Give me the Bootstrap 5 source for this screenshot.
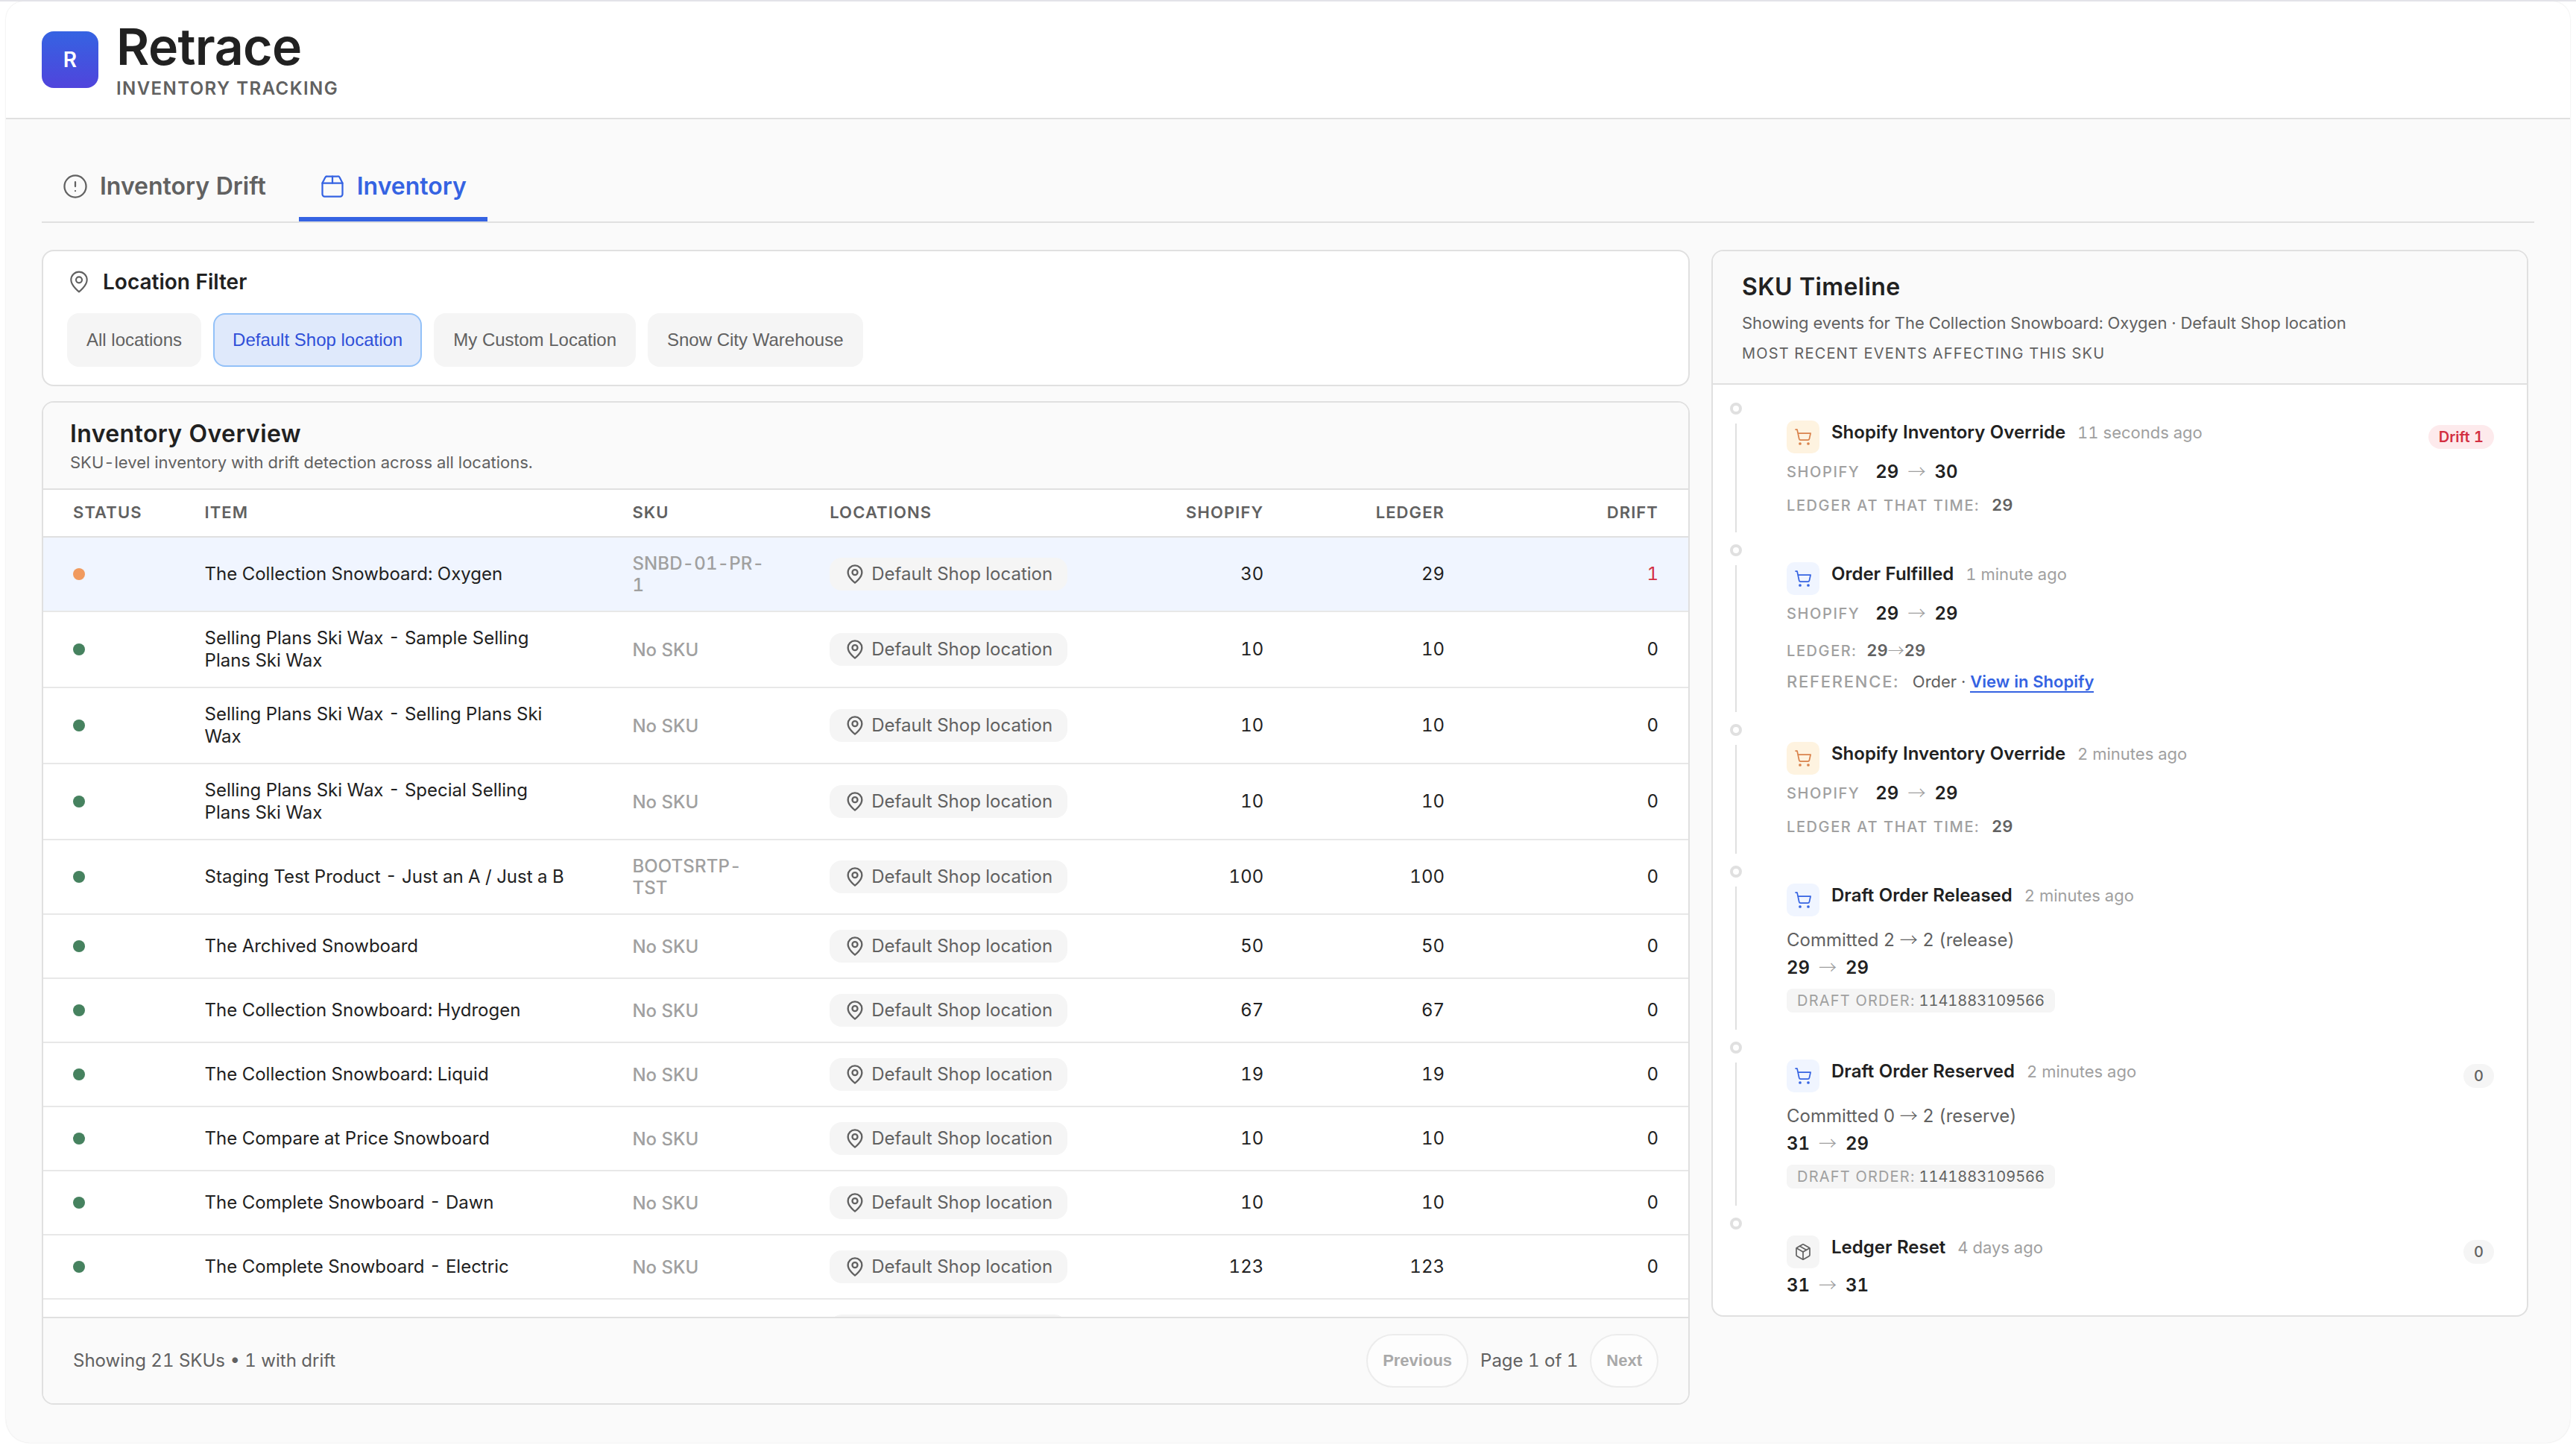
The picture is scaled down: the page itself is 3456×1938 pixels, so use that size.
<!DOCTYPE html>
<html lang="en">
<head>
  <meta charset="UTF-8" />
  <meta name="viewport" content="width=device-width, initial-scale=1" />
  <title>Retrace - Inventory Tracking</title>
  <!-- Bootstrap CSS -->
  <link href="https://cdn.jsdelivr.net/npm/bootstrap@5.3.0/dist/css/bootstrap.min.css" rel="stylesheet" />
  <style>
    /* Global Styles */
    html, body {
      margin: 0;
      height: 1938px;
      overflow: hidden;
    }
    body {
      font-family: Inter, "Liberation Sans", sans-serif;
      font-size: 24px;
      font-variant-numeric: tabular-nums;
      line-height: 1.25;
      color: #212121;
      background: #fff;
      border-top: 2px solid #e3e3e8;
      padding: 0 8px;
    }
    svg {
      fill: none;
      stroke: currentColor;
      stroke-width: 2;
      stroke-linecap: round;
      stroke-linejoin: round;
      flex-shrink: 0;
    }
    .app-shell {
      height: 1933px;
      background: #fafafa;
      border-radius: 24px 24px 32px 32px;
      box-shadow: 0 0 2px rgba(0,0,0,0.15);
      overflow: hidden;
    }
    /* Header */
    .app-header {
      height: 158px;
      padding: 0 48px;
      background: #fff;
      border-bottom: 2px solid #e0e0e0;
    }
    .logo-box {
      width: 76px;
      height: 76px;
      border-radius: 16px;
      background: linear-gradient(180deg, #3563e2, #5044dc);
      color: #fff;
      font-size: 28px;
      font-weight: 600;
    }
    .brand-name {
      font-size: 68px;
      font-weight: 600;
      line-height: 76px;
      letter-spacing: -0.009em;
      margin-top: -2px;
    }
    .brand-sub {
      margin-top: 4px;
      font-size: 24px;
      font-weight: 600;
      line-height: 30px;
      letter-spacing: 0.059em;
      color: #616161;
    }
    /* Tabs */
    .page-body { padding: 48px 48px 0; }
    .page-tabs {
      height: 91px;
      border-bottom: 2px solid #e0e0e0;
    }
    .page-tabs .nav-link {
      height: 89px;
      padding: 0 28px 0 27px;
      gap: 15px;
      font-size: 32px;
      font-weight: 600;
      color: #616161;
      border-bottom: 6px solid transparent;
    }
    .page-tabs .nav-link.active {
      color: #3563e2;
      border-bottom-color: #3563e2;
    }
    .page-tabs svg { stroke-width: 1.5; }
    /* Panels */
    .panel-grid {
      display: grid;
      grid-template-columns: 2211px 1096px;
      column-gap: 29px;
      margin-top: 36px;
      align-items: start;
    }
    .panel {
      background: #fff;
      border: 2px solid #e0e0e0;
      border-radius: 16px;
      overflow: hidden;
    }
    .panel-title {
      font-size: 32px;
      font-weight: 600;
      line-height: 40px;
      letter-spacing: 0.012em;
    }
    /* Location filter */
    .filter-panel {
      height: 183px;
      padding: 24px 32px;
    }
    .filter-title {
      font-size: 28px;
      font-weight: 600;
      line-height: 34px;
      height: 34px;
    }
    .filter-title svg { color: #616161; stroke-width: 1.6; }
    .filter-list { margin-top: 25px; }
    .filter-btn {
      height: 72px;
      padding: 0 24px;
      border: 2px solid transparent;
      border-radius: 16px;
      background: #f5f5f5;
      color: #616161;
      font: 24px "Liberation Sans", sans-serif;
    }
    .filter-btn.active {
      background: #dfe9fb;
      border-color: #93c1f8;
      color: #2f4fd8;
    }
    /* Inventory table */
    .overview-panel { margin-top: 20px; }
    .overview-head {
      height: 117px;
      padding: 22px 36px 0;
      background: #fafafa;
      border-bottom: 2px solid #e0e0e0;
    }
    .overview-sub {
      margin-top: 4px;
      font-size: 22px;
      line-height: 28px;
      color: #616161;
    }
    .table-wrap {
      height: 1109px;
      overflow: hidden;
    }
    .stock-table {
      width: 100%;
      table-layout: fixed;
      border-collapse: separate;
      border-spacing: 0;
    }
    .stock-table th {
      height: 64px;
      padding: 0 40px;
      font-size: 22px;
      font-weight: 600;
      letter-spacing: 0.05em;
      color: #616161;
      border-bottom: 2px solid #e0e0e0;
    }
    .stock-table td {
      padding: 20px 40px;
      vertical-align: middle;
      line-height: 30px;
      border-bottom: 2px solid #e8e8e8;
    }
    .stock-table tr.selected td { background: #f0f5ff; }
    .stock-table .sku-cell {
      font-weight: 500;
      line-height: 29px;
      color: #a0a0a0;
    }
    .sku-code { letter-spacing: 0.005em; }
    .qty { text-align: right; }
    .status-dot {
      display: block;
      width: 16px;
      height: 16px;
      border-radius: 50%;
      background: #46825f;
    }
    .status-dot.warn { background: #f19a5e; }
    .loc-chip {
      width: max-content;
      height: 44px;
      padding: 0 20px;
      gap: 8px;
      border-radius: 16px;
      background: #f5f5f5;
      color: #616161;
    }
    .drift-num { color: #d32f42; }
    .table-foot {
      height: 116px;
      padding: 0 40px;
      background: #fafafa;
      border-top: 2px solid #e0e0e0;
      color: #616161;
    }
    .pager-btn {
      height: 72px;
      padding: 0 20px;
      border: 2px solid #ececec;
      border-radius: 36px;
      background: #fdfdfd;
      color: #a9a9a9;
      font: bold 22px "Liberation Sans", sans-serif;
    }
    /* Timeline */
    .timeline-panel { height: 1431px; }
    .timeline-head {
      height: 179px;
      padding: 28px 39px 0;
      background: #fafafa;
      border-bottom: 2px solid #e0e0e0;
    }
    .timeline-sub {
      margin-top: 14px;
      font-size: 22px;
      line-height: 28px;
      letter-spacing: -0.001em;
      color: #616161;
    }
    .timeline-note {
      margin-top: 15px;
      font-size: 20px;
      line-height: 24px;
      letter-spacing: 0.059em;
      color: #616161;
    }
    .timeline-list { padding: 24px 44px 0 23px; }
    .event { gap: 60px; }
    .event-rail { width: 16px; }
    .rail-dot {
      width: 16px;
      height: 16px;
      border: 4px solid #e0e0e0;
      border-radius: 50%;
      flex-shrink: 0;
    }
    .rail-line {
      width: 2px;
      margin: 12px 0 16px;
      background: #e0e0e0;
    }
    .event-body { padding-top: 24px; }
    .ev-190 { height: 190px; }
    .ev-241 { height: 241px; }
    .ev-236 { height: 236px; }
    .ev-icon {
      width: 44px;
      height: 44px;
      border-radius: 10px;
      background: #f5f5f5;
      color: #616161;
    }
    .ev-icon svg { stroke-width: 1.7; }
    .ev-icon.amber { background: #fef3e0; color: #d9824b; }
    .ev-icon.blue { background: #f0f5ff; color: #3563e2; }
    .ev-title {
      margin-left: 16px;
      font-weight: 600;
      line-height: 31px;
    }
    .ev-time {
      margin-left: 16px;
      font-size: 22px;
      line-height: 32px;
      color: #a0a0a0;
    }
    .ev-pill {
      height: 32px;
      margin-top: 6px;
      padding: 0 14px;
      border-radius: 16px;
      background: #f5f5f5;
      color: #616161;
      font-size: 20px;
      font-weight: 500;
    }
    .ev-pill.danger-pill {
      background: #fdeaec;
      color: #d32f42;
      font-weight: 600;
    }
    .change {
      font-weight: 600;
      line-height: 30px;
    }
    .arrow {
      font-family: "Noto Sans CJK JP", sans-serif;
      font-weight: 300;
      line-height: 1;
    }
    .change .arrow, .ev-value .arrow { color: #a0a0a0; }
    .change .arrow { margin: 0 12px; }
    .ev-label {
      font-size: 20px;
      font-weight: 500;
      letter-spacing: 0.08em;
      color: #a0a0a0;
    }
    .ev-value {
      font-size: 22px;
      font-weight: 600;
      color: #616161;
    }
    .shop-line { height: 30px; margin-top: 10px; }
    .shop-line .ev-label { margin-right: 21px; }
    .reset-line { height: 30px; margin-top: 8px; }
    .ledger-line { height: 30px; margin-top: 15px; }
    .ledger-line.spaced { margin-top: 20px; }
    .ledger-line.spaced .ev-label { margin-right: 13px; }
    .ref-line { height: 30px; margin-top: 12px; font-size: 22px; color: #616161; }
    .ref-line .ev-label { font-size: 22px; margin-right: 18px; }
    .ref-line a {
      color: #3563e2;
      font-weight: 600;
      text-decoration: none;
      border-bottom: 2px solid #3563e2;
    }
    .note-line { margin-top: 16px; line-height: 32px; color: #616161; }
    .note-line + .change { margin-top: 6px; }
    .ref-chip {
      width: max-content;
      height: 32px;
      margin-top: 13px;
      padding: 0 14px;
      border-radius: 8px;
      background: #f5f5f5;
      font-size: 20px;
      color: #616161;
    }
    .ref-chip span { margin-right: 5px; color: #a0a0a0; letter-spacing: 0.06em; }
  </style>
</head>
<body>
  <!-- Shared icons -->
  <svg class="d-none">
    <symbol id="pin" viewBox="0 0 24 24"><path d="M20 10c0 6-8 12-8 12s-8-6-8-12a8 8 0 0 1 16 0Z" /><circle cx="12" cy="10" r="3" /></symbol>
    <symbol id="cart" viewBox="0 0 24 24"><circle cx="8" cy="21" r="1" /><circle cx="19" cy="21" r="1" /><path d="M2.05 2.05h2l2.66 12.42a2 2 0 0 0 2 1.58h9.78a2 2 0 0 0 1.95-1.57l1.65-7.43H5.12" /></symbol>
    <symbol id="box" viewBox="0 0 24 24"><path d="m7.5 4.27 9 5.15" /><path d="M21 8a2 2 0 0 0-1-1.73l-7-4a2 2 0 0 0-2 0l-7 4A2 2 0 0 0 3 8v8a2 2 0 0 0 1 1.73l7 4a2 2 0 0 0 2 0l7-4A2 2 0 0 0 21 16Z" /><path d="m3.3 7 8.7 5 8.7-5" /><path d="M12 22V12" /></symbol>
  </svg>

  <div class="app-shell">
    <!-- Header -->
    <header class="app-header d-flex align-items-center">
      <div class="logo-box d-flex align-items-center justify-content-center me-4">R</div>
      <div>
        <div class="brand-name">Retrace</div>
        <div class="brand-sub">INVENTORY TRACKING</div>
      </div>
    </header>

    <main class="page-body">
      <!-- Tabs -->
      <nav class="nav page-tabs">
        <a class="nav-link d-flex align-items-center" href="#">
          <svg width="36" height="36" viewBox="0 0 24 24"><circle cx="12" cy="12" r="9.7" /><path d="M12 8v4M12 16h.01" /></svg>
          Inventory Drift
        </a>
        <a class="nav-link active d-flex align-items-center ms-3" href="#">
          <svg width="36" height="36" viewBox="0 0 24 24"><path d="M3 9h18v10a2 2 0 0 1-2 2H5a2 2 0 0 1-2-2V9Z" /><path d="m3 9 2.45-4.9A2 2 0 0 1 7.24 3h9.52a2 2 0 0 1 1.8 1.1L21 9" /><path d="M12 3v6" /></svg>
          Inventory
        </a>
      </nav>

      <div class="panel-grid">
        <div>
          <!-- Location Filter -->
          <section class="panel filter-panel">
            <div class="filter-title d-flex align-items-center gap-3">
              <svg width="32" height="32"><use href="#pin" /></svg>
              Location Filter
            </div>
            <div class="filter-list d-flex gap-3">
              <button class="filter-btn">All locations</button>
              <button class="filter-btn active">Default Shop location</button>
              <button class="filter-btn">My Custom Location</button>
              <button class="filter-btn">Snow City Warehouse</button>
            </div>
          </section>

          <!-- Inventory Overview -->
          <section class="panel overview-panel">
            <div class="overview-head">
              <div class="panel-title">Inventory Overview</div>
              <div class="overview-sub">SKU-level inventory with drift detection across all locations.</div>
            </div>
            <div class="table-wrap">
              <table class="stock-table">
                <colgroup>
                  <col style="width: 8%" /><col style="width: 26%" /><col style="width: 12%" /><col style="width: 18%" /><col style="width: 12%" /><col style="width: 11%" /><col style="width: 13%" />
                </colgroup>
                <thead>
                  <tr>
                    <th>STATUS</th>
                    <th>ITEM</th>
                    <th>SKU</th>
                    <th>LOCATIONS</th>
                    <th class="qty">SHOPIFY</th>
                    <th class="qty">LEDGER</th>
                    <th class="qty">DRIFT</th>
                  </tr>
                </thead>
                <tbody id="stockRows"></tbody>
              </table>
            </div>
            <div class="table-foot d-flex align-items-center justify-content-between">
              <span>Showing 21 SKUs • 1 with drift</span>
              <div class="d-flex align-items-center gap-3">
                <button class="pager-btn" disabled>Previous</button>
                <span>Page 1 of 1</span>
                <button class="pager-btn" disabled>Next</button>
              </div>
            </div>
          </section>
        </div>

        <!-- SKU Timeline -->
        <aside class="panel timeline-panel">
          <div class="timeline-head">
            <div class="panel-title">SKU Timeline</div>
            <div class="timeline-sub">Showing events for The Collection Snowboard: Oxygen · Default Shop location</div>
            <div class="timeline-note">MOST RECENT EVENTS AFFECTING THIS SKU</div>
          </div>
          <div class="timeline-list" id="timelineList"></div>
        </aside>
      </div>
    </main>
  </div>

  <script src="https://cdn.jsdelivr.net/npm/bootstrap@5.3.0/dist/js/bootstrap.bundle.min.js"></script>
  <script>
    const stock = [
      { item: "The Collection Snowboard: Oxygen", sku: "SNBD-01-PR-1", shopify: 30, ledger: 29, drift: 1 },
      { item: "Selling Plans Ski Wax - Sample Selling Plans Ski Wax", shopify: 10, ledger: 10, drift: 0 },
      { item: "Selling Plans Ski Wax - Selling Plans Ski Wax", shopify: 10, ledger: 10, drift: 0 },
      { item: "Selling Plans Ski Wax - Special Selling Plans Ski Wax", shopify: 10, ledger: 10, drift: 0 },
      { item: "Staging Test Product - Just an A / Just a B", sku: "BOOTSRTP-TST", shopify: 100, ledger: 100, drift: 0 },
      { item: "The Archived Snowboard", shopify: 50, ledger: 50, drift: 0 },
      { item: "The Collection Snowboard: Hydrogen", shopify: 67, ledger: 67, drift: 0 },
      { item: "The Collection Snowboard: Liquid", shopify: 19, ledger: 19, drift: 0 },
      { item: "The Compare at Price Snowboard", shopify: 10, ledger: 10, drift: 0 },
      { item: "The Complete Snowboard - Dawn", shopify: 10, ledger: 10, drift: 0 },
      { item: "The Complete Snowboard - Electric", shopify: 123, ledger: 123, drift: 0 }
    ];

    // Render inventory rows
    document.getElementById("stockRows").innerHTML = stock.map(row => `
      <tr class="${row.drift ? "selected" : ""}">
        <td><span class="status-dot ${row.drift ? "warn" : ""}"></span></td>
        <td>${row.item}</td>
        <td class="sku-cell">${row.sku ? `<span class="sku-code">${row.sku}</span>` : "No SKU"}</td>
        <td><div class="loc-chip d-flex align-items-center"><svg width="28" height="28"><use href="#pin" /></svg>Default Shop location</div></td>
        <td class="qty">${row.shopify}</td>
        <td class="qty">${row.ledger}</td>
        <td class="qty ${row.drift ? "drift-num" : ""}">${row.drift}</td>
      </tr>`).join("") + `
      <tr>
        <td colspan="3"></td>
        <td><div class="loc-chip" style="width: 318px"></div></td>
        <td colspan="3"></td>
      </tr>`;

    const arrow = `<span class="arrow">→</span>`;
    const change = (from, to) => `<span class="change">${from}${arrow}${to}</span>`;
    const shopLine = (from, to) => `<div class="shop-line d-flex align-items-center"><span class="ev-label">SHOPIFY</span>${change(from, to)}</div>`;
    const ledgerAt = n => `<div class="ledger-line d-flex align-items-center"><span class="ev-label me-3">LEDGER AT THAT TIME:</span><span class="ev-value">${n}</span></div>`;
    const draftBody = (note, from, to) => `
      <div class="note-line">${note}</div>
      <div class="change">${from}${arrow}${to}</div>
      <div class="ref-chip d-flex align-items-center"><span>DRAFT ORDER:</span>1141883109566</div>`;

    const events = [
      { size: "ev-190", tone: "amber", icon: "cart", title: "Shopify Inventory Override", time: "11 seconds ago",
        pill: `<div class="ev-pill danger-pill d-flex align-items-center ms-auto">Drift 1</div>`,
        body: shopLine(29, 30) + ledgerAt(29) },
      { size: "ev-241", tone: "blue", icon: "cart", title: "Order Fulfilled", time: "1 minute ago",
        body: shopLine(29, 29) + `
          <div class="ledger-line spaced d-flex align-items-center"><span class="ev-label">LEDGER:</span><span class="ev-value">29${arrow}29</span></div>
          <div class="ref-line d-flex align-items-center"><span class="ev-label">REFERENCE:</span><span>Order · <a href="#">View in Shopify</a></span></div>` },
      { size: "ev-190", tone: "amber", icon: "cart", title: "Shopify Inventory Override", time: "2 minutes ago",
        body: shopLine(29, 29) + ledgerAt(29) },
      { size: "ev-236", tone: "blue", icon: "cart", title: "Draft Order Released", time: "2 minutes ago",
        body: draftBody(`Committed 2 ${arrow} 2 (release)`, 29, 29) },
      { size: "ev-236", tone: "blue", icon: "cart", title: "Draft Order Reserved", time: "2 minutes ago",
        pill: `<div class="ev-pill d-flex align-items-center ms-auto">0</div>`,
        body: draftBody(`Committed 0 ${arrow} 2 (reserve)`, 31, 29) },
      { size: "", tone: "", icon: "box", title: "Ledger Reset", time: "4 days ago", last: true,
        pill: `<div class="ev-pill d-flex align-items-center ms-auto">0</div>`,
        body: `<div class="reset-line">${change(31, 31)}</div>` }
    ];

    // Render timeline events
    document.getElementById("timelineList").innerHTML = events.map(ev => `
      <div class="event d-flex ${ev.size}">
        <div class="event-rail d-flex flex-column align-items-center">
          <div class="rail-dot"></div>
          ${ev.last ? "" : `<div class="rail-line flex-grow-1"></div>`}
        </div>
        <div class="event-body flex-grow-1">
          <div class="d-flex align-items-start">
            <div class="ev-icon ${ev.tone} d-flex align-items-center justify-content-center"><svg width="24" height="24"><use href="#${ev.icon}" /></svg></div>
            <div class="ev-title">${ev.title}</div>
            <div class="ev-time">${ev.time}</div>
            ${ev.pill || ""}
          </div>
          ${ev.body}
        </div>
      </div>`).join("");
  </script>
</body>
</html>
